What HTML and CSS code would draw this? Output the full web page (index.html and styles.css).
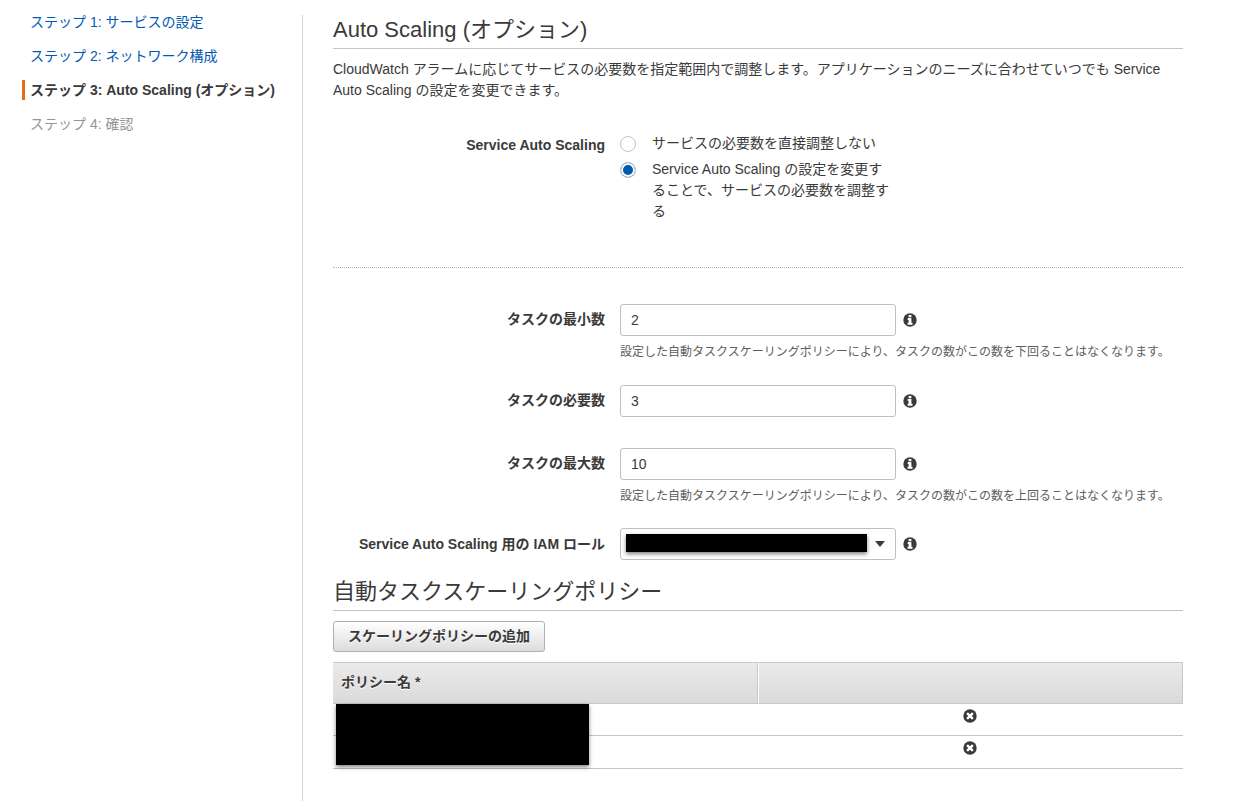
FILE: index.html
```html
<!DOCTYPE html>
<html lang="ja">
<head>
  <meta charset="UTF-8">
  <title>Auto Scaling (オプション)</title>
  <link rel="stylesheet" href="styles.css">
</head>
<body>

  <!-- shared icons -->
  <svg class="icon-defs" aria-hidden="true">
    <symbol id="icon-info" viewBox="0 0 14 14">
      <circle cx="7" cy="7" r="6.7" fill="#3a3a3a"/>
      <path d="M5.6 2h2.8v2.2H5.6zM4.7 5.1h3.7v4.7h1.1v1.9H4.6V9.8h1V7h-.9z" fill="#fff"/>
    </symbol>
    <symbol id="icon-remove" viewBox="0 0 14 14">
      <circle cx="7" cy="7" r="6.7" fill="#3a3a3a"/>
      <path d="M4.1 4.1l5.8 5.8M9.9 4.1l-5.8 5.8" stroke="#fff" stroke-width="2.4"/>
    </symbol>
  </svg>

  <nav class="sidebar">
    <ol class="steps">
      <li><a href="#step1">ステップ 1: サービスの設定</a></li>
      <li><a href="#step2">ステップ 2: ネットワーク構成</a></li>
      <li class="active">ステップ 3: Auto Scaling (オプション)</li>
      <li class="disabled">ステップ 4: 確認</li>
    </ol>
  </nav>

  <main class="content">
    <h2>Auto Scaling (オプション)</h2>
    <p class="description">CloudWatch アラームに応じてサービスの必要数を指定範囲内で調整します。アプリケーションのニーズに合わせていつでも Service Auto Scaling の設定を変更できます。</p>

    <form>
      <div class="form-row scaling-row" role="radiogroup" aria-labelledby="scalingLabel">
        <span class="form-label" id="scalingLabel">Service Auto Scaling</span>
        <div class="radio-list">
          <label class="radio-option">
            <input type="radio" name="scaling" value="none">
            <span>サービスの必要数を直接調整しない</span>
          </label>
          <label class="radio-option">
            <input type="radio" name="scaling" value="auto" checked>
            <span>Service Auto Scaling の設定を変更することで、サービスの必要数を調整する</span>
          </label>
        </div>
      </div>

      <div class="form-section">
        <div class="form-row">
          <label class="form-label" for="minTasks">タスクの最小数</label>
          <div class="field">
            <div class="control">
              <input type="text" id="minTasks" value="2">
              <svg class="icon"><use href="#icon-info"/></svg>
            </div>
            <p class="hint">設定した自動タスクスケーリングポリシーにより、タスクの数がこの数を下回ることはなくなります。</p>
          </div>
        </div>

        <div class="form-row no-hint">
          <label class="form-label" for="desiredTasks">タスクの必要数</label>
          <div class="field">
            <div class="control">
              <input type="text" id="desiredTasks" value="3">
              <svg class="icon"><use href="#icon-info"/></svg>
            </div>
          </div>
        </div>

        <div class="form-row max-row">
          <label class="form-label" for="maxTasks">タスクの最大数</label>
          <div class="field">
            <div class="control">
              <input type="text" id="maxTasks" value="10">
              <svg class="icon"><use href="#icon-info"/></svg>
            </div>
            <p class="hint">設定した自動タスクスケーリングポリシーにより、タスクの数がこの数を上回ることはなくなります。</p>
          </div>
        </div>

        <div class="form-row role-row">
          <label class="form-label" for="iamRole">Service Auto Scaling 用の IAM ロール</label>
          <div class="field">
            <div class="control">
              <div class="select-box">
                <select id="iamRole"><option></option></select>
                <span class="mask mask-role"></span>
                <span class="caret"></span>
              </div>
              <svg class="icon"><use href="#icon-info"/></svg>
            </div>
          </div>
        </div>
      </div>

      <h2>自動タスクスケーリングポリシー</h2>
      <button type="button" class="add-button">スケーリングポリシーの追加</button>

      <div class="table-box">
        <table>
          <thead>
            <tr><th>ポリシー名 *</th><th></th></tr>
          </thead>
          <tbody>
            <tr>
              <td></td>
              <td><button type="button" class="remove-button" aria-label="削除"><svg class="icon"><use href="#icon-remove"/></svg></button></td>
            </tr>
            <tr>
              <td></td>
              <td><button type="button" class="remove-button" aria-label="削除"><svg class="icon"><use href="#icon-remove"/></svg></button></td>
            </tr>
          </tbody>
        </table>
        <span class="mask mask-policies"></span>
      </div>
    </form>
  </main>

</body>
</html>
```

FILE: styles.css
```css
* {
  box-sizing: border-box;
}

body {
  font-family: "Liberation Sans", "Noto Sans CJK JP", sans-serif;
  font-size: 14px;
  line-height: 21px;
  background: #fff;
  margin: 0;
  display: flex;
  min-height: 100vh;
  color: #3a3a3a;
}

.icon-defs {
  display: none;
}

.icon {
  display: block;
  width: 14px;
  height: 14px;
  flex-shrink: 0;
}

/* Steps */
.sidebar {
  width: 303px;
  flex-shrink: 0;
  display: flex;
  margin-top: 15px;
  border-right: 1px solid #d5d5d5;
}

.steps {
  list-style: none;
  margin: -3px 0 0;
  padding: 0 0 0 22px;
}

.steps li {
  height: 20px;
  line-height: 20px;
  margin-bottom: 14px;
  padding-left: 5px;
  border-left: 3px solid transparent;
  white-space: nowrap;
}

.steps a {
  color: #0059b3;
  text-decoration: none;
}

.steps a:hover {
  text-decoration: underline;
}

.steps .active {
  border-left-color: #e56a1e;
  font-weight: bold;
}

.steps .disabled {
  color: #959595;
}

/* Content */
.content {
  flex: 1;
  min-width: 0;
  padding: 11px 56px 32px 30px;
}

h2 {
  margin: 0 0 10px;
  height: 38px;
  line-height: 37px;
  font-size: 22px;
  font-weight: normal;
  border-bottom: 1px solid #c3c3c3;
}

.description {
  margin: 0;
}

.form-row {
  display: flex;
  gap: 15px;
  margin-bottom: 24px;
}

.form-label {
  width: 32%;
  line-height: 30px;
  font-weight: bold;
  text-align: right;
}

.field {
  flex: 1;
  min-width: 0;
}

.scaling-row {
  margin: 32px 0 0;
  padding-bottom: 40px;
  border-bottom: 1px dotted #b5b5b5;
}

.scaling-row .form-label {
  line-height: 24px;
}

.radio-list {
  width: 276px;
}

.radio-option {
  display: flex;
  gap: 16px;
  margin-bottom: 5px;
}

.radio-option span {
  flex: 1;
}

.radio-option input {
  appearance: none;
  width: 16px;
  height: 16px;
  flex-shrink: 0;
  margin: 3px 0 0;
  border: 1px solid #c3c3c3;
  border-radius: 50%;
  background: #fff;
}

.radio-option input:checked {
  background: #0059b3;
  box-shadow: inset 0 0 0 2px #fff;
}

.form-section {
  padding-top: 36px;
}

.no-hint {
  margin-bottom: 31px;
}

.max-row {
  margin-bottom: 23px;
}

.role-row {
  margin-bottom: 13px;
}

.role-row .form-label {
  line-height: 32px;
}

.control {
  display: flex;
  align-items: center;
  gap: 7px;
}

.control input,
.select-box {
  width: 276px;
  height: 32px;
}

.control input,
.control select {
  border: 1px solid #c0c0c0;
  border-radius: 3px;
  padding: 0 10px;
  background: #fff;
  color: #3a3a3a;
  font: inherit;
}

.select-box {
  position: relative;
}

.select-box select {
  appearance: none;
  display: block;
  width: 100%;
  height: 100%;
}

.caret {
  position: absolute;
  top: 13px;
  right: 11px;
  border: 5px solid transparent;
  border-top: 6px solid #3a3a3a;
  border-bottom: 0;
  pointer-events: none;
}

.hint {
  margin: 7px 0 0;
  font-size: 12px;
  line-height: 18px;
  color: #5e5e5e;
}

/* Blacked-out values */
.mask {
  position: absolute;
  background: #000;
  box-shadow: 0 2px 4px rgba(0, 0, 0, 0.5);
  pointer-events: none;
}

.mask-role {
  top: 6px;
  left: 6px;
  width: 241px;
  height: 18px;
}

.mask-policies {
  top: 42px;
  left: 3px;
  width: 253px;
  height: 61px;
}

.add-button {
  display: block;
  height: 31px;
  padding: 0 14px;
  border: 1px solid #b0b0b0;
  border-radius: 3px;
  background: linear-gradient(#fff, #dcdcdc);
  color: #3a3a3a;
  font: inherit;
  font-weight: bold;
  text-shadow: 0 1px 0 #fff;
  cursor: pointer;
}

/* Policies */
.table-box {
  position: relative;
  margin-top: 10px;
}

table {
  width: 100%;
  table-layout: fixed;
  border-collapse: separate;
  border-spacing: 0;
}

th {
  height: 42px;
  padding: 0 8px 2px;
  border: 1px solid #c9c9c9;
  border-left: 0;
  background: linear-gradient(#eaeaea, #dadada);
  text-align: left;
  text-shadow: 0 1px 0 #fff;
}

th + th {
  border-left: 1px solid #fff;
}

td {
  height: 32px;
  padding: 5px 2px 0 0;
  border-bottom: 1px solid #c3c3c3;
  vertical-align: top;
}

tr:last-child td {
  height: 33px;
}

.remove-button {
  display: block;
  margin: 0 auto;
  padding: 0;
  border: 0;
  background: none;
  cursor: pointer;
}
```
